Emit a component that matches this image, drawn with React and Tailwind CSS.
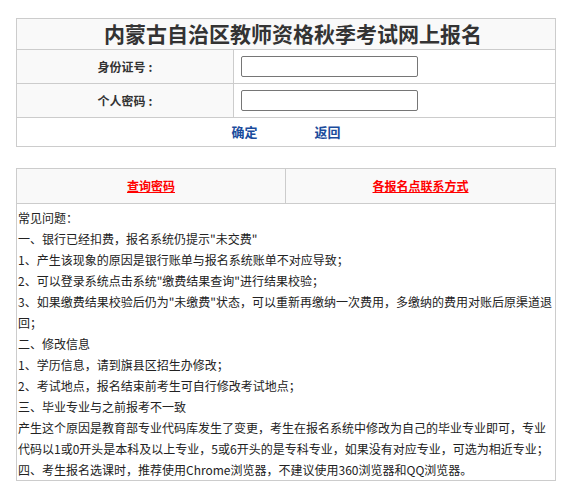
import React from 'react';

const faqLines = [
  '常见问题：',
  '一、银行已经扣费，报名系统仍提示"未交费"',
  '1、产生该现象的原因是银行账单与报名系统账单不对应导致；',
  '2、可以登录系统点击系统"缴费结果查询"进行结果校验；',
  '3、如果缴费结果校验后仍为"未缴费"状态，可以重新再缴纳一次费用，多缴纳的费用对账后原渠道退回；',
  '二、修改信息',
  '1、学历信息，请到旗县区招生办修改；',
  '2、考试地点，报名结束前考生可自行修改考试地点；',
  '三、毕业专业与之前报考不一致',
  '产生这个原因是教育部专业代码库发生了变更，考生在报名系统中修改为自己的毕业专业即可，专业代码以1或0开头是本科及以上专业，5或6开头的是专科专业，如果没有对应专业，可选为相近专业；',
  '四、考生报名选课时，推荐使用Chrome浏览器，不建议使用360浏览器和QQ浏览器。',
];

const App = () => {
  return (
    <div className="min-h-[499px] bg-white font-['Noto_Sans_CJK_SC',sans-serif] text-[#333] [text-spacing-trim:space-all]">
      <div className="pt-[18px]">
        <div className="mx-auto w-[540px] border border-[#ccc]">
          <div className="flex h-[30px] items-center justify-center bg-[#f9f9f9] pl-[14px] text-[21px] font-bold text-[#333]">
            内蒙古自治区教师资格秋季考试网上报名
          </div>

          <div className="flex h-[34px] border-t border-[#ccc]">
            <div className="flex w-[216px] items-center justify-center gap-[3px] bg-[#f9f9f9] text-[12px] font-bold">
              <span>身份证号</span>
              <span>:</span>
            </div>
            <div className="flex flex-1 items-center border-l border-[#ccc] bg-white pl-[7px]">
              <input type="text" className="h-[21px] w-[177px] rounded-[2px] border border-[#767676] bg-white" />
            </div>
          </div>

          <div className="flex h-[34px] border-t border-[#ccc]">
            <div className="flex w-[216px] items-center justify-center gap-[3px] bg-[#f9f9f9] text-[12px] font-bold">
              <span>个人密码</span>
              <span>:</span>
            </div>
            <div className="flex flex-1 items-center border-l border-[#ccc] bg-white pl-[7px]">
              <input type="password" className="h-[21px] w-[177px] rounded-[2px] border border-[#767676] bg-white" />
            </div>
          </div>

          <div className="flex h-[29px] items-center justify-center gap-[57px] border-t border-[#ccc] bg-white text-[13px] font-bold text-[#1a4c9c]">
            <a href="#">确定</a>
            <a href="#">返回</a>
          </div>
        </div>

        <div className="mx-auto mt-[21px] w-[540px] border border-[#ccc]">
          <div className="flex h-[34px] bg-[#f9f9f9] text-[12px] font-bold">
            <div className="flex w-[269px] items-center justify-center border-r border-[#ccc]">
              <a href="#" className="text-[#ff0000] underline">查询密码</a>
            </div>
            <div className="flex flex-1 items-center justify-center">
              <a href="#" className="text-[#ff0000] underline">各报名点联系方式</a>
            </div>
          </div>
          <div className="border-t border-[#ccc] px-[1px] pt-[3px] text-[12px] leading-[21px] text-[#222]">
            {faqLines.map((line, i) => (
              <div key={i}>{line}</div>
            ))}
          </div>
        </div>
      </div>
    </div>
  );
};

export default App;
